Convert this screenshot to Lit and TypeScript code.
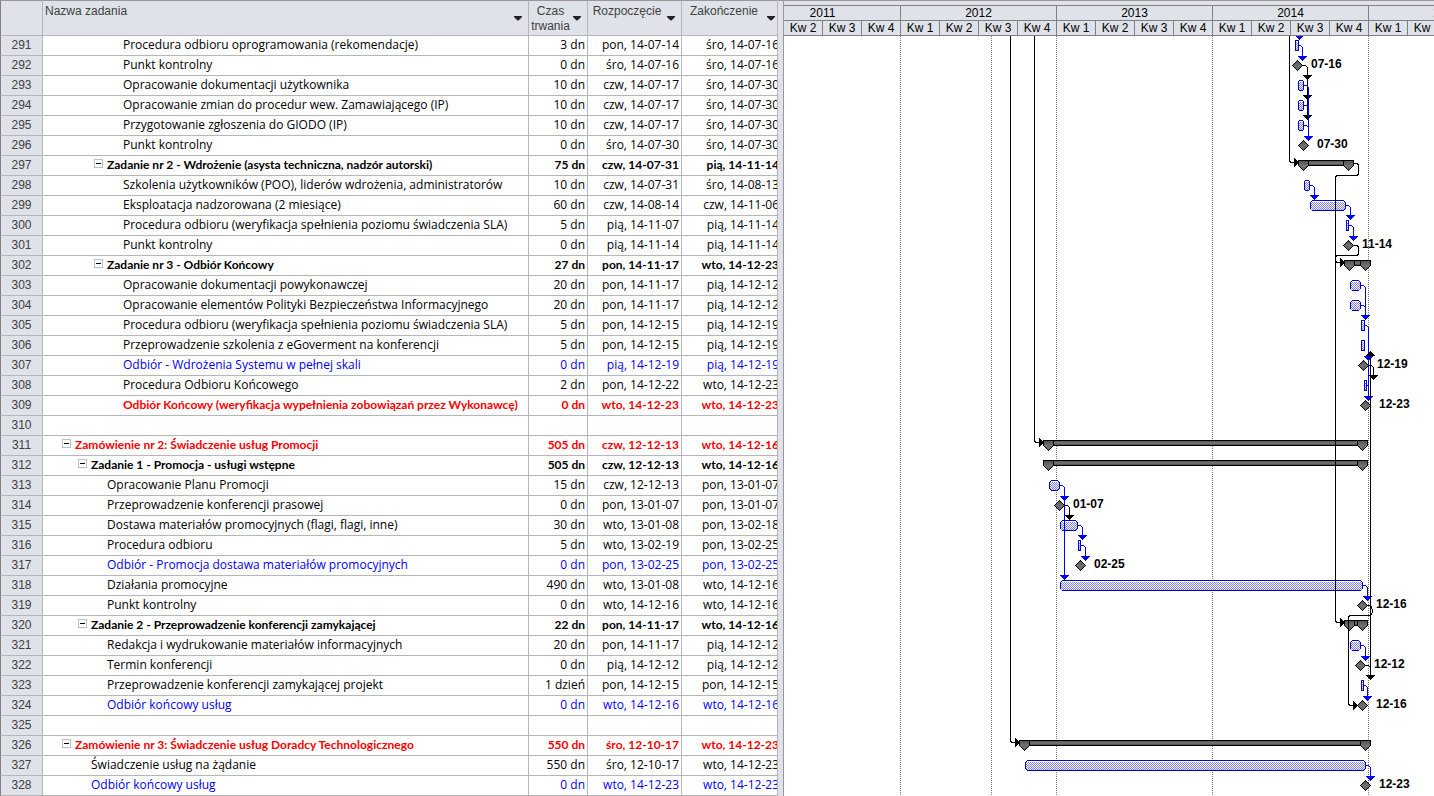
import { LitElement, html, svg, css } from "lit";
import { customElement } from "lit/decorators.js";
import { classMap } from "lit/directives/class-map.js";

interface Task {
  id: number;
  name: string;
  level: number;
  duration: string;
  start: string;
  finish: string;
  tone?: "summary" | "order" | "alert" | "accept";
}

const t = (
  id: number,
  level: number,
  name: string,
  duration = "",
  start = "",
  finish = "",
  tone?: Task["tone"],
): Task => ({ id, level, name, duration, start, finish, tone });

const TASKS: Task[] = [
  t(291, 4, "Procedura odbioru oprogramowania (rekomendacje)", "3 dn", "pon, 14-07-14", "śro, 14-07-16"),
  t(292, 4, "Punkt kontrolny", "0 dn", "śro, 14-07-16", "śro, 14-07-16"),
  t(293, 4, "Opracowanie dokumentacji użytkownika", "10 dn", "czw, 14-07-17", "śro, 14-07-30"),
  t(294, 4, "Opracowanie zmian do procedur wew. Zamawiającego (IP)", "10 dn", "czw, 14-07-17", "śro, 14-07-30"),
  t(295, 4, "Przygotowanie zgłoszenia do GIODO (IP)", "10 dn", "czw, 14-07-17", "śro, 14-07-30"),
  t(296, 4, "Punkt kontrolny", "0 dn", "śro, 14-07-30", "śro, 14-07-30"),
  t(297, 3, "Zadanie nr 2 - Wdrożenie (asysta techniczna, nadzór autorski)", "75 dn", "czw, 14-07-31", "pią, 14-11-14", "summary"),
  t(298, 4, "Szkolenia użytkowników (POO), liderów wdrożenia, administratorów", "10 dn", "czw, 14-07-31", "śro, 14-08-13"),
  t(299, 4, "Eksploatacja nadzorowana (2 miesiące)", "60 dn", "czw, 14-08-14", "czw, 14-11-06"),
  t(300, 4, "Procedura odbioru (weryfikacja spełnienia poziomu świadczenia SLA)", "5 dn", "pią, 14-11-07", "pią, 14-11-14"),
  t(301, 4, "Punkt kontrolny", "0 dn", "pią, 14-11-14", "pią, 14-11-14"),
  t(302, 3, "Zadanie nr 3 - Odbiór Końcowy", "27 dn", "pon, 14-11-17", "wto, 14-12-23", "summary"),
  t(303, 4, "Opracowanie dokumentacji powykonawczej", "20 dn", "pon, 14-11-17", "pią, 14-12-12"),
  t(304, 4, "Opracowanie elementów Polityki Bezpieczeństwa Informacyjnego", "20 dn", "pon, 14-11-17", "pią, 14-12-12"),
  t(305, 4, "Procedura odbioru (weryfikacja spełnienia poziomu świadczenia SLA)", "5 dn", "pon, 14-12-15", "pią, 14-12-19"),
  t(306, 4, "Przeprowadzenie szkolenia z eGoverment na konferencji", "5 dn", "pon, 14-12-15", "pią, 14-12-19"),
  t(307, 4, "Odbiór - Wdrożenia Systemu w pełnej skali", "0 dn", "pią, 14-12-19", "pią, 14-12-19", "accept"),
  t(308, 4, "Procedura Odbioru Końcowego", "2 dn", "pon, 14-12-22", "wto, 14-12-23"),
  t(309, 4, "Odbiór Końcowy (weryfikacja wypełnienia zobowiązań przez Wykonawcę)", "0 dn", "wto, 14-12-23", "wto, 14-12-23", "alert"),
  t(310, 4, ""),
  t(311, 1, "Zamówienie nr 2: Świadczenie usług Promocji", "505 dn", "czw, 12-12-13", "wto, 14-12-16", "order"),
  t(312, 2, "Zadanie 1 - Promocja - usługi wstępne", "505 dn", "czw, 12-12-13", "wto, 14-12-16", "summary"),
  t(313, 3, "Opracowanie Planu Promocji", "15 dn", "czw, 12-12-13", "pon, 13-01-07"),
  t(314, 3, "Przeprowadzenie konferencji prasowej", "0 dn", "pon, 13-01-07", "pon, 13-01-07"),
  t(315, 3, "Dostawa materiałów promocyjnych (flagi, flagi, inne)", "30 dn", "wto, 13-01-08", "pon, 13-02-18"),
  t(316, 3, "Procedura odbioru", "5 dn", "wto, 13-02-19", "pon, 13-02-25"),
  t(317, 3, "Odbiór - Promocja dostawa materiałów promocyjnych", "0 dn", "pon, 13-02-25", "pon, 13-02-25", "accept"),
  t(318, 3, "Działania promocyjne", "490 dn", "wto, 13-01-08", "wto, 14-12-16"),
  t(319, 3, "Punkt kontrolny", "0 dn", "wto, 14-12-16", "wto, 14-12-16"),
  t(320, 2, "Zadanie 2 - Przeprowadzenie konferencji zamykającej", "22 dn", "pon, 14-11-17", "wto, 14-12-16", "summary"),
  t(321, 3, "Redakcja i wydrukowanie materiałów informacyjnych", "20 dn", "pon, 14-11-17", "pią, 14-12-12"),
  t(322, 3, "Termin konferencji", "0 dn", "pią, 14-12-12", "pią, 14-12-12"),
  t(323, 3, "Przeprowadzenie konferencji zamykającej projekt", "1 dzień", "pon, 14-12-15", "pon, 14-12-15"),
  t(324, 3, "Odbiór końcowy usług", "0 dn", "wto, 14-12-16", "wto, 14-12-16", "accept"),
  t(325, 3, ""),
  t(326, 1, "Zamówienie nr 3: Świadczenie usług Doradcy Technologicznego", "550 dn", "śro, 12-10-17", "wto, 14-12-23", "order"),
  t(327, 2, "Świadczenie usług na żądanie", "550 dn", "śro, 12-10-17", "wto, 14-12-23"),
  t(328, 2, "Odbiór końcowy usług", "0 dn", "wto, 14-12-23", "wto, 14-12-23", "accept"),
];

@customElement("task-table")
class TaskTable extends LitElement {
  static styles = css`
    :host {
      display: block;
      overflow: hidden;
      border-right: 1px solid #b4b6ba;
      box-sizing: border-box;
    }
    table {
      width: 782px;
      table-layout: fixed;
      border-collapse: separate;
      border-spacing: 0;
      font: 12px/18px "Open Sans", sans-serif;
      color: #000;
    }
    .c-id { width: 43px; }
    .c-duration { width: 59px; }
    .c-start { width: 94px; }
    .c-finish { width: 100px; }
    th, td {
      padding: 0;
      border-right: 1px solid #b4b6ba;
      border-bottom: 1px solid #b4b6ba;
      box-sizing: border-box;
      font-weight: inherit;
      white-space: nowrap;
      overflow: hidden;
      vertical-align: top;
    }
    thead th {
      height: 36px;
      border-top: 1px solid #98989c;
      background: #dfe2e8;
    }
    .head {
      display: flex;
      justify-content: space-between;
      padding: 3px 4px 0 2px;
      font: 12px/15px "Liberation Sans", Arial, sans-serif;
      color: #404040;
      text-align: center;
    }
    .label {
      flex: 1;
      white-space: normal;
    }
    .name-head .label { text-align: left; }
    .drop {
      align-self: flex-start;
      display: block;
      width: 13px;
      margin-top: 12px;
      padding: 0;
      border: 0;
      background: none;
      line-height: 0;
      text-align: center;
    }
    .num {
      height: 20px;
      border-left: 1px solid #808084;
      background: #dfe2e8;
      color: #404040;
      font: 12px/19px "Liberation Sans", Arial, sans-serif;
      text-align: center;
    }
    .corner { border-left: 1px solid #808084; }
    .value { padding-right: 2px; text-align: right; }
    .name { display: flex; }
    .level-1 { padding-left: 19px; }
    .level-2 { padding-left: 35px; }
    .level-3 { padding-left: 51px; }
    .level-4 { padding-left: 67px; }
    .slot {
      flex: none;
      width: 13px;
      padding-top: 3px;
    }
    .toggle {
      display: block;
      width: 9px;
      height: 9px;
      padding: 0;
      border: 1px solid #b4c0cc;
      background: #fff;
      line-height: 0;
    }
    .summary, .order, .alert { font-family: Lato, "Open Sans", sans-serif; font-weight: 700; }
    .order, .alert { color: #f00; }
    .accept { color: #00f; }
  `;

  private drop(label: string) {
    return html`<button class="drop" type="button" aria-label=${`Filtruj: ${label}`}>
      <svg width="8" height="5" viewBox="0 0 8 5"><path d="M0 0h8v1L4.5 4.500h-1L0 1z" fill="#222" /></svg>
    </button>`;
  }

  private head(label: string, cls = "") {
    return html`<th scope="col" class=${cls}>
      <div class="head"><span class="label">${label}</span>${this.drop(label)}</div>
    </th>`;
  }

  private row(task: Task) {
    const parent = task.tone === "summary" || task.tone === "order";
    return html`<tr class=${task.tone ?? "plain"}>
      <th scope="row" class="num">${task.id}</th>
      <td>
        <div class=${classMap({ name: true, [`level-${task.level}`]: true })}>
          <span class="slot">${parent
            ? html`<button class="toggle" type="button" aria-label="Zwiń" aria-expanded="true">
                <svg width="7" height="7" viewBox="0 0 7 7"><path d="M1 3h5v1H1z" fill="#000" /></svg>
              </button>`
            : ""}</span>
          <span>${task.name}</span>
        </div>
      </td>
      <td class="value">${task.duration}</td>
      <td class="value">${task.start}</td>
      <td class="value">${task.finish}</td>
    </tr>`;
  }

  render() {
    return html`<table>
      <colgroup>
        <col class="c-id" /><col /><col class="c-duration" /><col class="c-start" /><col class="c-finish" />
      </colgroup>
      <thead>
        <tr>
          <th class="corner"></th>
          ${this.head("Nazwa zadania", "name-head")}
          ${this.head("Czas trwania")}
          ${this.head("Rozpoczęcie")}
          ${this.head("Zakończenie")}
        </tr>
      </thead>
      <tbody>${TASKS.map((task) => this.row(task))}</tbody>
    </table>`;
  }
}

/* Chart geometry: x counts from the left edge of the chart, which is the
   second quarter of 2011; one quarter is 39 units wide, one row 20 high. */
const ORIGIN = 784;
const ROW = 20;
const mid = (id: number) => (id - 291) * ROW + 9;
const px = (x: number) => x - ORIGIN;

const BARS: [number, number, number][] = [
  [291, 1295, 1298], [293, 1298, 1303], [294, 1298, 1303], [295, 1298, 1303],
  [298, 1304, 1309], [299, 1310, 1345], [300, 1346, 1348], [303, 1350, 1360],
  [304, 1350, 1360], [305, 1361, 1364], [306, 1361, 1364], [308, 1364, 1366],
  [313, 1049, 1059], [315, 1060, 1077], [316, 1078, 1080], [318, 1060, 1362],
  [321, 1350, 1360], [323, 1361, 1363], [327, 1025, 1365],
];

const SUMMARIES: [number, number, number][] = [
  [297, 1303, 1348], [302, 1349, 1365], [311, 1048, 1362],
  [312, 1048, 1362], [320, 1349, 1362], [326, 1024, 1365],
];

const MILESTONES: [number, number, string][] = [
  [292, 1297, "07-16"], [296, 1303, "07-30"], [301, 1348, "11-14"], [307, 1363, "12-19"],
  [309, 1365, "12-23"], [314, 1059, "01-07"], [317, 1080, "02-25"], [319, 1362, "12-16"],
  [322, 1360, "12-12"], [324, 1362, "12-16"], [328, 1365, "12-23"],
];

/* Finish-to-start links: source row, source x, column x, target row, colour. */
const LINKS: [number, number, number, number, "blue" | "black"][] = [
  [291, 1299, 1302, 292, "blue"], [292, 1302, 1307, 293, "black"], [292, 1302, 1307, 294, "black"],
  [292, 1302, 1307, 295, "black"], [293, 1304, 1308, 296, "blue"], [294, 1304, 1308, 296, "blue"],
  [295, 1304, 1308, 296, "blue"], [298, 1310, 1314, 299, "blue"], [299, 1346, 1350, 300, "blue"],
  [300, 1349, 1353, 301, "blue"], [303, 1361, 1365, 305, "blue"], [304, 1361, 1365, 305, "blue"],
  [305, 1365, 1368, 307, "blue"], [307, 1368, 1373, 308, "black"], [305, 1365, 1368, 309, "blue"],
  [308, 1367, 1368, 309, "blue"], [313, 1060, 1064, 314, "blue"], [313, 1060, 1064, 318, "blue"],
  [314, 1064, 1069, 315, "black"], [315, 1078, 1082, 316, "blue"], [316, 1081, 1085, 317, "blue"],
  [318, 1363, 1367, 319, "blue"], [321, 1361, 1365, 322, "blue"], [322, 1365, 1370, 323, "black"],
  [323, 1364, 1367, 324, "blue"], [327, 1366, 1370, 328, "blue"],
];

const MILESTONE_ROWS = new Set(MILESTONES.map(([id]) => id));

@customElement("gantt-chart")
class GanttChart extends LitElement {
  static styles = css`
    :host {
      display: block;
      min-width: 0;
      overflow: hidden;
      font: 12px/14px "Liberation Sans", Arial, sans-serif;
      color: #000;
    }
    .scale {
      height: 36px;
      box-sizing: border-box;
      border-top: 1px solid #98989c;
      padding-top: 4px;
      background: #dfe2e8;
    }
    .years {
      display: flex;
      margin-left: -39px;
    }
    .year {
      flex: none;
      width: 156px;
      border-top: 1px solid #808080;
      text-align: center;
    }
    .title, .quarter {
      height: 15px;
      box-sizing: border-box;
      border-right: 1px solid #808080;
      border-bottom: 1px solid #808080;
    }
    .quarters {
      display: grid;
      grid-template-columns: repeat(4, 1fr);
    }
    .canvas { display: block; }
    .grid { stroke: #808080; stroke-dasharray: 1 1; }
    .bar { fill: url(#fade); stroke: #0000c8; }
    .dither { fill: url(#dots); }
    .link { fill: none; }
    .link.blue { stroke: #0000f0; }
    .link.black { stroke: #000; }
    .tip.blue { fill: #0000f0; }
    .tip.black { fill: #000; }
    .beam { fill: url(#steel); stroke: #000; }
    .cap { fill: url(#steel-cap); stroke: #000; }
    .diamond { fill: url(#steel-cap); stroke: #000; }
    .date { font: 700 12px "Liberation Sans", Arial, sans-serif; }
  `;

  private bar([id, from, to]: [number, number, number]) {
    const l = px(from) + 0.5;
    const r = px(to) + 0.5;
    const y = mid(id) + 0.5;
    const c = to - from > 9 ? 2 : to - from > 4 ? 1 : 0;
    const d = `M${l + c} ${y - 5}H${r - c}L${r} ${y - 5 + c}V${y + 5 - c}L${r - c} ${y + 5}H${l + c}L${l} ${y + 5 - c}V${y - 5 + c}Z`;
    return svg`<path class="bar" d=${d} /><rect class="dither" x=${l + 0.5} y=${y - 3.5} width=${to - from - 1} height="8" />`;
  }

  private summary([id, a, b]: [number, number, number]) {
    const y = mid(id) - 4.5;
    const cap = (x: number) => svg`<path class="cap" d=${`M${px(x) - 4.5} ${y}h10v5l-5 5l-5 -5z`} />`;
    return svg`<rect class="beam" x=${px(a) + 0.5} y=${y} width=${b - a} height="5" />${cap(a)}${cap(b)}`;
  }

  private milestone([id, x, label]: [number, number, string]) {
    const y = mid(id) + 0.5;
    return svg`<path class="diamond" d=${`M${px(x) + 0.5} ${y - 5}l5 5l-5 5l-5 -5z`} />
      <text class="date" x=${px(x) + 14} y=${y + 2.5}>${label}</text>`;
  }

  private down(x: number, y: number, tone: string) {
    return svg`<path class=${`tip ${tone}`} d=${`M${px(x) - 4} ${y}h9v1h-1v1h-1v1h-1v1h-1v1h-1v-1h-1v-1h-1v-1h-1v-1h-1z`} />`;
  }

  private right(x: number, y: number) {
    return svg`<path class="tip black" d=${`M${px(x)} ${y - 4}v9h1v-1h1v-1h1v-1h1v-1h1v-1h-1v-1h-1v-1h-1v-1h-1v-1z`} />`;
  }

  private link([from, x1, x2, to, tone]: [number, number, number, number, "blue" | "black"]) {
    const y1 = mid(from) + 0.5;
    const end = mid(to) - (MILESTONE_ROWS.has(to) ? 9 : 10);
    const c = Math.min(3, x2 - x1);
    return svg`<path class=${`link ${tone}`} d=${`M${px(x1)} ${y1}H${px(x2) + 0.5 - c}q${c} 0 ${c} 3V${end}`} />
      ${this.down(x2, end, tone)}`;
  }

  private route(d: string) {
    return svg`<path class="link black" transform="translate(-784 -36)" d=${d} />`;
  }

  render() {
    const quarters = ["Kw 1", "Kw 2", "Kw 3", "Kw 4"];
    return html`
      <div class="scale">
        <div class="years">
          ${[2011, 2012, 2013, 2014, 2015].map(
            (year) => html`<div class="year">
              <div class="title">${year}</div>
              <div class="quarters">${quarters.map((q) => html`<div class="quarter">${q}</div>`)}</div>
            </div>`,
          )}
        </div>
      </div>
      <svg class="canvas" width="741" height="760" shape-rendering="crispEdges" role="img" aria-label="Wykres Gantta">
        <defs>
          <pattern id="dots" width="2" height="2" patternUnits="userSpaceOnUse">
            <path d="M0 0h1v1h-1zM1 1h1v1h-1z" fill="#8080f8" />
          </pattern>
          <linearGradient id="fade" x2="0" y2="1">
            <stop offset="0" stop-color="#fff" /><stop offset="0.6" stop-color="#fff" /><stop offset="1" stop-color="#d8d8ff" />
          </linearGradient>
          <linearGradient id="steel" x2="0" y2="1">
            <stop offset="0" stop-color="#484848" /><stop offset="0.5" stop-color="#787878" /><stop offset="1" stop-color="#404040" />
          </linearGradient>
          <linearGradient id="steel-cap" x2="0" y2="1">
            <stop offset="0" stop-color="#505050" /><stop offset="0.5" stop-color="#707070" /><stop offset="1" stop-color="#606060" />
          </linearGradient>
        </defs>
        ${[900, 991, 1056, 1212, 1368].map(
          (x) => svg`<line class="grid" x1=${px(x) + 0.5} x2=${px(x) + 0.5} y1="0" y2="760" />`,
        )}
        ${BARS.map((b) => this.bar(b))}
        ${SUMMARIES.map((s) => this.summary(s))}
        ${LINKS.map((l) => this.link(l))}
        ${this.down(1299, -1, "blue")}
        ${this.route("M1289.5 36V159.500q0 3 3 3H1295")}
        ${this.right(1294, 126)}
        ${this.route("M1353 163.500H1356q2.500 0 2.500 3V173q0 2.500 -3 2.500H1338q-2.500 0 -2.500 3V619.500q0 3 3 3H1341")}
        ${this.right(1340, 586)}
        ${this.route("M1353 245.500H1356q2.500 0 2.500 3V253q0 2.500 -3 2.500H1338q-2.500 0 -2.500 3V259.500q0 3 3 3H1341")}
        ${this.right(1340, 226)}
        ${this.route("M1034.500 36V439.500q0 3 3 3H1040")}
        ${this.right(1039, 406)}
        ${this.route("M1010.500 36V739.500q0 3 3 3H1016")}
        ${this.right(1015, 706)}
        ${this.route("M1370.500 352V675")}
        <path class="tip black" d="M586 315h1v1h1v1h1v1h1v1h1v1h-9v-1h1v-1h1v-1h1v-1h1z" />
        ${this.route("M1367 605.500H1369q3 0 3 3V612.500q0 3 -3 3H1351q-2.500 0 -2.500 3V702.500q0 3 3 3H1354")}
        ${this.right(1353, 669)}
        ${MILESTONES.map((m) => this.milestone(m))}
      </svg>
    `;
  }
}

@customElement("app-root")
class AppRoot extends LitElement {
  static styles = css`
    :host {
      display: grid;
      grid-template-columns: 778px 6px minmax(0, 1fr);
      background: #fff;
      overflow: hidden;
    }
    .splitter {
      box-sizing: border-box;
      border-top: 1px solid #98989c;
      border-right: 1px solid #98989c;
      background: #dfe2e8;
    }
  `;

  render() {
    return html`
      <task-table></task-table>
      <div class="splitter"></div>
      <gantt-chart></gantt-chart>
    `;
  }
}
